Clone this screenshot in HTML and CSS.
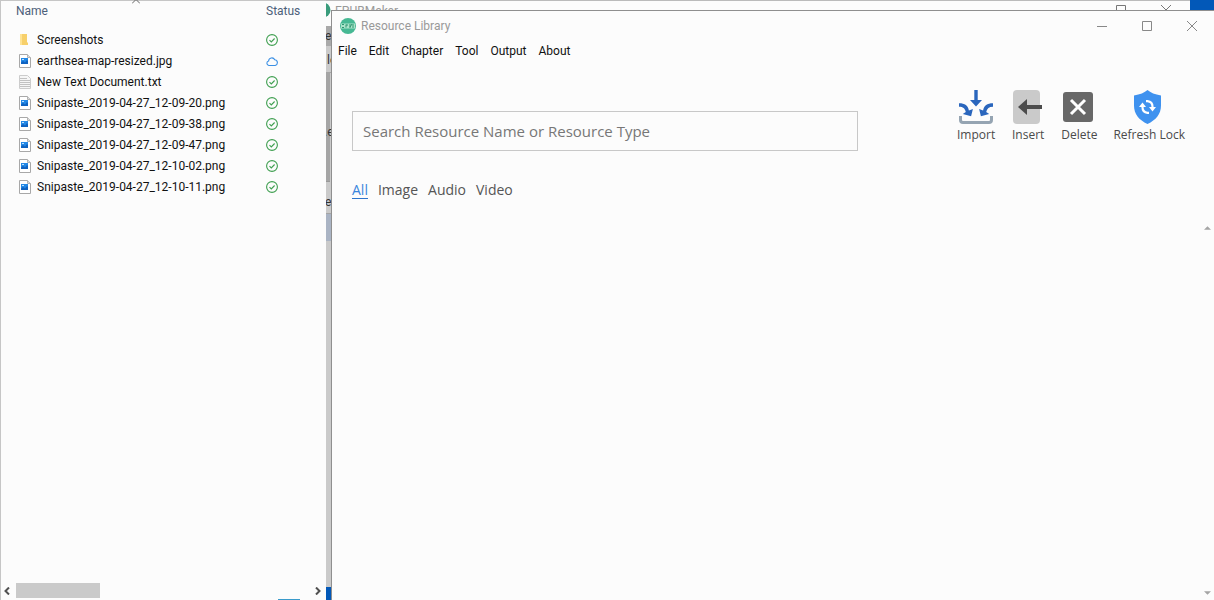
FILE: index.html
```
<!DOCTYPE html>
<html lang="en">
<head>
<meta charset="utf-8">
<title>Resource Library</title>
<link rel="stylesheet" href="styles.css">
</head>
<body>
<svg width="0" height="0" class="defs" aria-hidden="true">
  <symbol id="picture" viewBox="0 0 12 14">
    <path d="M.5.5h8l3 3v10H.5z" fill="#fff" stroke="#a8a8a8"/>
    <path d="M8.500.5v3h3" fill="#ddd" stroke="#b4b4b4"/>
    <path d="M2 4h7v6H2z" fill="#2388e6"/>
    <path d="M2 10V8.500L4 7l2 1.500L8 6l1 1v3z" fill="#0f62c0"/>
    <path d="M3 5h2v1H3z" fill="#bfe2ff"/>
  </symbol>
  <symbol id="check" viewBox="0 0 12 12">
    <circle cx="6" cy="6" r="5.400" fill="none" stroke="#3f9f50" stroke-width="1.100"/>
    <path d="M3.500 6.200l1.800 1.800 3.300-3.500" fill="none" stroke="#3f9f50" stroke-width="1.100"/>
  </symbol>
</svg>
<div class="desktop">
  <div class="backdrop">
    <header class="backdrop-bar">
      <svg class="backdrop-logo" viewBox="0 0 8 16"><circle cx="0" cy="8" r="7.500" fill="#3a9c7c"/></svg>
      <span class="backdrop-title">EPUBMaker</span>
      <svg class="backdrop-controls" viewBox="0 0 102 20"><path d="M0 9.500h10M46.500 15V4.500h9V15M91 4l5 5 5-5" fill="none" stroke="#777"/></svg>
    </header>
    <div class="backdrop-menu">e</div>
    <div class="backdrop-tools">le</div>
    <div class="backdrop-panel">.e</div>
    <div class="backdrop-row">e</div>
    <div class="backdrop-selected"></div>
  </div>

  <section class="explorer">
    <svg class="sort" viewBox="0 0 8 4"><path d="M0 3.500L4-.5l4 4" fill="none" stroke="#666"/></svg>
    <table class="files">
      <thead><tr><th class="name">Name</th><th>Status</th></tr></thead>
      <tbody>
        <tr><td><span class="file"><svg class="ico" viewBox="0 0 12 14"><path d="M1 1h5v11H1z" fill="#ffe394"/><path d="M3 1h5v8l1 1v2H3z" fill="#f7d06b"/></svg>Screenshots</span></td><td><svg class="state"><use href="#check"/></svg></td></tr>
        <tr><td><span class="file"><svg class="ico"><use href="#picture"/></svg>earthsea-map-resized.jpg</span></td><td><svg class="state" viewBox="0 0 12 12"><path d="M2.800 10.500a2.300 2.300 0 0 1-.2-4.500A3.200 3.200 0 0 1 8.700 4.800a2.900 2.900 0 0 1 .5 5.700z" fill="none" stroke="#3a8fe4" stroke-width="1.100"/></svg></td></tr>
        <tr><td><span class="file"><svg class="ico" viewBox="0 0 12 14"><path d="M.5.5h8l3 3v10H.5z" fill="#f6f6f6" stroke="#ccc"/><path d="M1 3.500h7M1 5.500h10M1 7.500h10M1 9.500h10M1 11.500h10" stroke="#c2c2c2"/></svg>New Text Document.txt</span></td><td><svg class="state"><use href="#check"/></svg></td></tr>
        <tr><td><span class="file"><svg class="ico"><use href="#picture"/></svg>Snipaste_2019-04-27_12-09-20.png</span></td><td><svg class="state"><use href="#check"/></svg></td></tr>
        <tr><td><span class="file"><svg class="ico"><use href="#picture"/></svg>Snipaste_2019-04-27_12-09-38.png</span></td><td><svg class="state"><use href="#check"/></svg></td></tr>
        <tr><td><span class="file"><svg class="ico"><use href="#picture"/></svg>Snipaste_2019-04-27_12-09-47.png</span></td><td><svg class="state"><use href="#check"/></svg></td></tr>
        <tr><td><span class="file"><svg class="ico"><use href="#picture"/></svg>Snipaste_2019-04-27_12-10-02.png</span></td><td><svg class="state"><use href="#check"/></svg></td></tr>
        <tr><td><span class="file"><svg class="ico"><use href="#picture"/></svg>Snipaste_2019-04-27_12-10-11.png</span></td><td><svg class="state"><use href="#check"/></svg></td></tr>
      </tbody>
    </table>
    <div class="hscroll">
      <svg class="arrow" viewBox="0 0 6 8"><path d="M5 .5L1.500 4 5 7.500" fill="none" stroke="#505050" stroke-width="2"/></svg>
      <div class="track"><div class="thumb"></div></div>
      <svg class="arrow" viewBox="0 0 6 8"><path d="M1 .5L4.500 4 1 7.500" fill="none" stroke="#505050" stroke-width="2"/></svg>
    </div>
    <div class="view-mark"></div>
  </section>

  <main class="library">
    <header class="titlebar">
      <svg class="logo" viewBox="0 0 16 16"><circle cx="8" cy="8" r="8" fill="#46b893"/><path d="M1 5.500h14v5H1z" fill="#a9e3c9"/><path d="M2 6.500h2M2 9.500h2M6 6.500v3M6 7h2M10 6v4M10 9l2-3M13 6v4" stroke="#2e9470" fill="none"/></svg>
      <h1>Resource Library</h1>
      <div class="controls">
        <button aria-label="Minimize"><svg viewBox="0 0 10 10"><path d="M0 5.500h10" stroke="#888"/></svg></button>
        <button aria-label="Maximize"><svg viewBox="0 0 10 10"><path d="M.5.5h9v9h-9z" fill="none" stroke="#888"/></svg></button>
        <button aria-label="Close"><svg viewBox="0 0 10 10"><path d="M0 0l10 10M10 0L0 10" stroke="#888"/></svg></button>
      </div>
    </header>
    <nav class="menu">
      <button>File</button><button>Edit</button><button>Chapter</button><button>Tool</button><button>Output</button><button>About</button>
    </nav>
    <div class="head">
      <input class="search" type="text" aria-label="Search resources" placeholder="Search Resource Name or Resource Type">
      <div class="actions">
        <button><svg viewBox="0 0 34 34"><path d="M1.500 26v4q0 2.500 2.500 2.500h26q2.500 0 2.500-2.500v-4" fill="none" stroke="#95a4b2" stroke-width="3"/><path d="M15.300 0h3.400v10H23l-6 6.500-6-6.500h4.300z" fill="#2a66bd"/><path d="M0 13.300c6 0 9 2.300 9.900 7.200l4-1.600-1.800 7.400-8.300-2.300 3-2C6 18.500 4 16.800 0 16.800zM34 13.300c-6 0-9 2.300-9.900 7.200l-4-1.600 1.800 7.400 8.300-2.300-3-2c.8-3.500 2.800-5.200 6.800-5.200z" fill="#2a66bd"/></svg>Import</button>
        <button><svg viewBox="0 0 34 34"><rect x="2" width="27" height="34" rx="4" fill="#cacaca"/><path d="M7 17l9-8v6h15v4H16v6z" fill="#4c4c4c"/></svg>Insert</button>
        <button><svg viewBox="0 0 34 34"><rect x="1" y="2" width="30" height="30" rx="3" fill="#686868"/><path d="M9 10l14 14M23 10L9 24" stroke="#fff" stroke-width="3"/></svg>Delete</button>
        <button><svg viewBox="0 0 34 34"><path d="M15.500 0Q20 4 29 5.500v10C29 24 24 30 15.500 34 7 30 2 24 2 15.500v-10Q11 4 15.500 0z" fill="#3f92ef"/><g fill="none" stroke="#fff" stroke-width="2.200"><path d="M14 11.200h1.500q5 .5 5 5.500v1M17 22.800h-1.500q-5-.5-5-5.500v-1"/></g><path d="M17 17h7l-3.500 4.500zM7 17h7l-3.500-4.500z" fill="#fff"/></svg>Refresh Lock</button>
      </div>
    </div>
    <nav class="tabs">
      <button class="active">All</button><button>Image</button><button>Audio</button><button>Video</button>
    </nav>
    <div class="results">
      <svg viewBox="0 0 8 4"><path d="M0 4l4-4 4 4z" fill="#a5a5a5"/></svg>
      <svg viewBox="0 0 8 4"><path d="M0 0l4 4 4-4z" fill="#a5a5a5"/></svg>
    </div>
  </main>
</div>
</body>
</html>
```
FILE: styles.css
```
* { box-sizing: border-box; }
body { margin: 0; font-family: Roboto, "Open Sans", sans-serif; font-size: 12px; line-height: 16px; color: #111; }
button { margin: 0; padding: 0; border: 0; background: none; font: inherit; color: inherit; }
svg { display: block; flex: none; }
.defs { position: absolute; }
.desktop { position: relative; height: 100vh; overflow: hidden; background: #0258b8; }

/* Window behind the library */
.backdrop { position: absolute; top: 0; left: 323px; right: 24px; bottom: 13px; border-top: 1px solid #bbb; background: #cacaca; color: #333; overflow: hidden; }
.backdrop-bar { display: flex; gap: 4px; height: 25px; padding-right: 18px; background: #fcfcfc; color: #999; }
.backdrop-logo { width: 8px; height: 18px; }
.backdrop-title { padding-top: 2px; }
.backdrop-controls { width: 102px; height: 20px; margin-left: auto; }
.backdrop-menu { height: 20px; padding: 2px 0 0 2px; background: #a9a9a9; }
.backdrop-tools { height: 27px; padding: 6px 0 0 4px; border-bottom: 1px solid #a5a5a5; }
.backdrop-panel { width: 7px; height: 109px; padding: 51px 0 0 1px; background: #a5a5a5; border-bottom: 1px solid #999; }
.backdrop-row { height: 32px; padding: 12px 0 0 2px; border-bottom: 1px solid #a5a5a5; }
.backdrop-selected { height: 27px; background: #aab4c4; }

/* File explorer */
.explorer { position: absolute; top: 0; left: 0; bottom: 0; width: 326px; display: flex; flex-direction: column; background: #fcfcfc; border: 1px solid #c6c6c6; border-width: 1px 0 0 1px; }
.sort { position: absolute; top: -1px; left: 131px; width: 8px; height: 4px; }
.files { border-collapse: collapse; table-layout: fixed; width: 100%; }
.files th { height: 28px; padding: 2px 0 10px; text-align: left; font-weight: 400; color: #4c607a; }
.files .name { width: 265px; padding-left: 15px; }
.files td { height: 21px; padding: 0; }
.file { display: flex; align-items: center; gap: 6px; padding-left: 18px; white-space: nowrap; }
.ico { width: 12px; height: 14px; }
.state { width: 12px; height: 12px; }
.hscroll { display: flex; align-items: center; gap: 6px; height: 17px; margin-top: auto; margin-bottom: 1px; padding: 0 5px 0 3px; }
.arrow { width: 6px; height: 8px; }
.track { flex: 1; }
.thumb { width: 84px; height: 15px; background: #cacaca; }
.view-mark { position: absolute; bottom: 0; left: 277px; width: 22px; height: 1px; background: #3a9bcb; }

/* Library window */
.library { position: absolute; top: 10px; left: 331px; right: 0; bottom: 0; display: flex; flex-direction: column; background: #fcfcfc; border: 1px solid #8f8f8f; border-width: 1px 0 0 1px; }
.titlebar { display: flex; align-items: center; height: 30px; padding-left: 8px; }
.logo { width: 16px; height: 16px; }
h1 { margin: 0 0 0 5px; font-size: 12px; font-weight: 400; color: #999; }
.controls { display: flex; margin-left: auto; }
.controls button { display: grid; place-items: center; width: 45px; height: 28px; }
.controls svg { width: 10px; height: 10px; }
.menu { display: flex; gap: 12px; padding: 2px 6px; }
.head { display: flex; align-items: flex-start; justify-content: space-between; padding: 29px 29px 0 20px; font-family: "Open Sans", sans-serif; }
.search { flex: 0 1 506px; height: 40px; margin-top: 21px; padding: 0 10px; border: 1px solid #c8c8c8; border-radius: 0; background: #fcfcfc; font-family: inherit; font-size: 15px; color: #333; }
.search::placeholder { color: #777; opacity: 1; }
.actions { display: flex; gap: 16px; color: #4a4a4a; }
.actions button { display: flex; flex-direction: column; align-items: center; gap: 3px; white-space: nowrap; }
.actions svg { width: 34px; height: 34px; }
.tabs { display: flex; gap: 10px; padding: 30px 20px 0; font-family: "Open Sans", sans-serif; font-size: 14px; line-height: 17px; color: #555; }
.tabs button { border-bottom: 1px solid transparent; }
.tabs .active { color: #3a86dd; border-color: #2d74cc; }
.results { flex: 1; display: flex; flex-direction: column; justify-content: space-between; align-items: flex-end; padding: 27px 3px 5px; }
.results svg { width: 7px; height: 4px; }
```
